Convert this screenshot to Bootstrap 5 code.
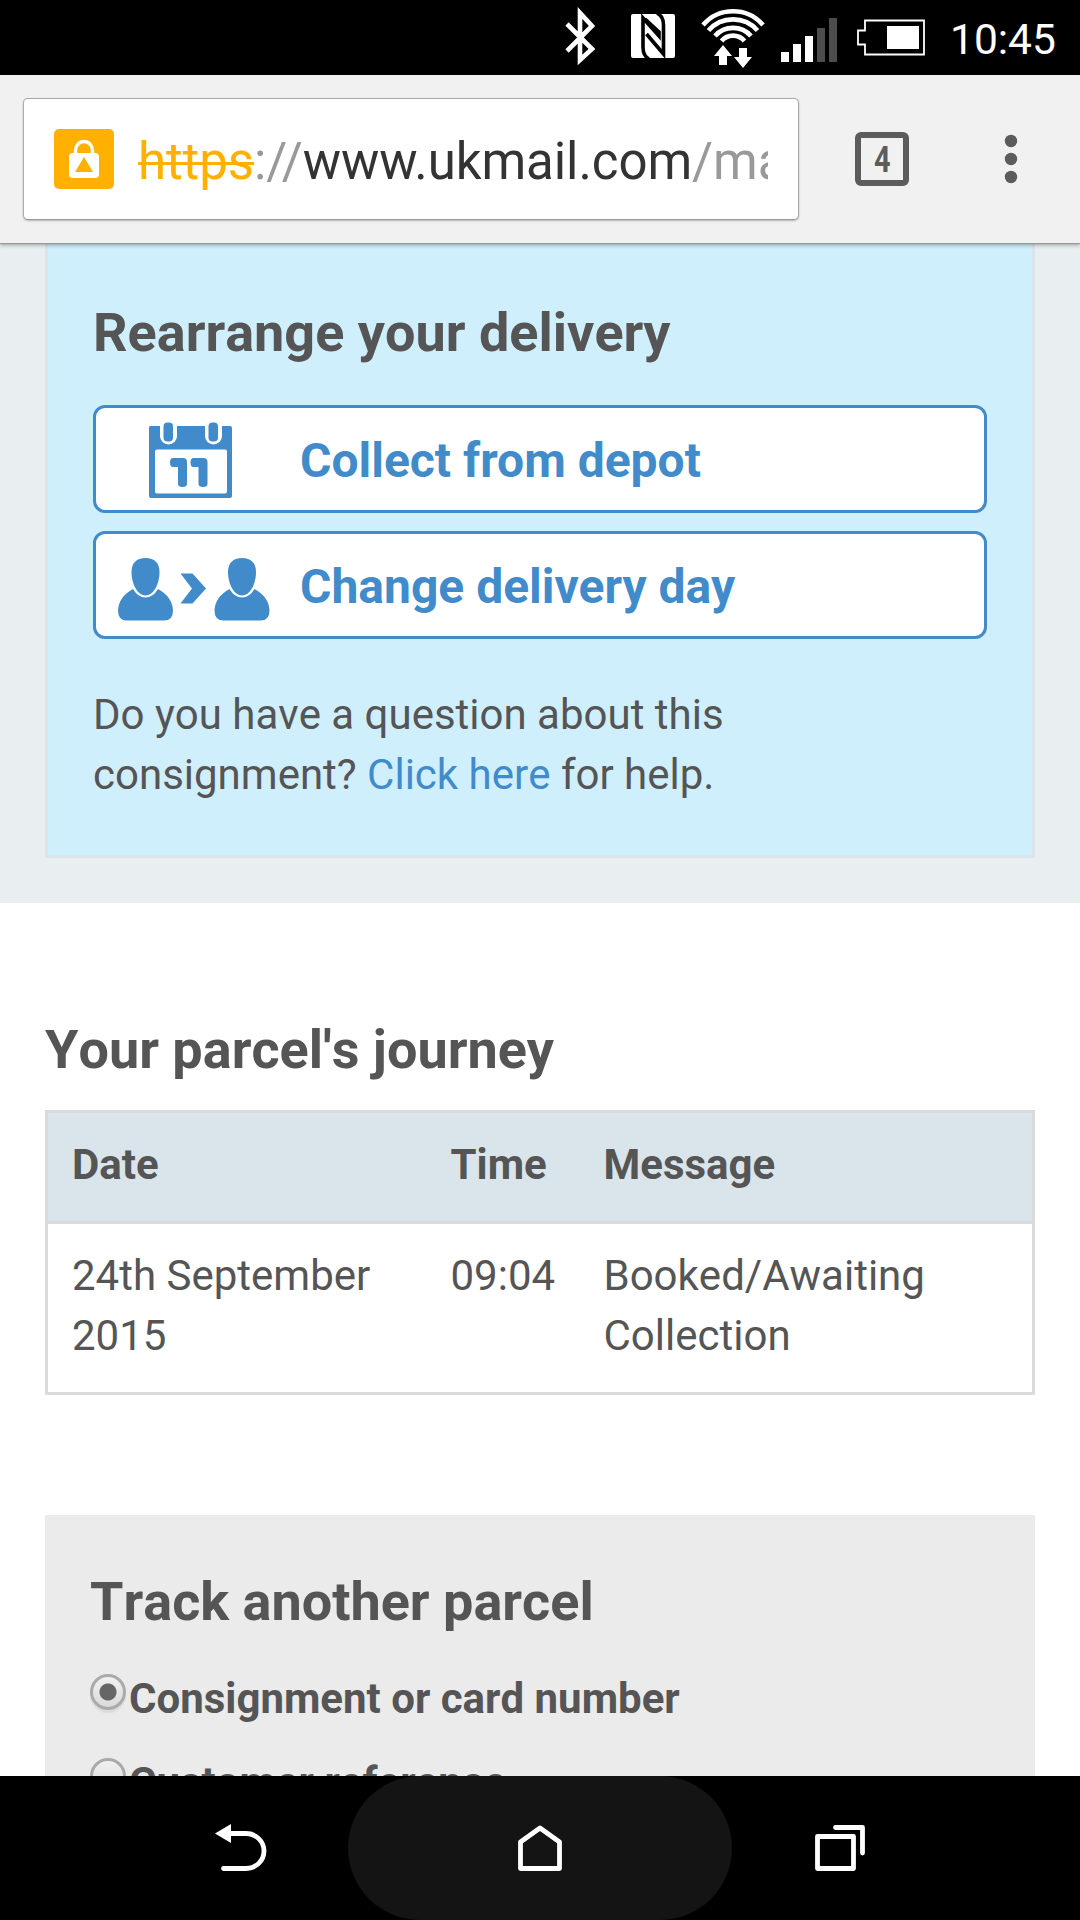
<!DOCTYPE html>
<html lang="en">
<head>
<meta charset="utf-8">
<meta name="viewport" content="width=device-width, initial-scale=1">
<title>UK Mail - parcel tracking</title>
<link href="https://cdn.jsdelivr.net/npm/bootstrap@5.3.0/dist/css/bootstrap.min.css" rel="stylesheet">
<style>
body{font-family:Roboto,"Liberation Sans",sans-serif;font-size:42px;line-height:60px;color:#555;background:#fff;font-kerning:none}
.screen{width:1080px;height:1920px}
.statusbar{height:75px;padding-right:26px}
.statusbar svg{width:400px;height:75px}
.clock{width:104px;line-height:79px;font-size:42.500px;color:#fff}
.toolbar{height:168px;background:#f1f1f1;padding:23px 0 22px 23px;box-shadow:0 1px 0 #999,0 2px 4px rgba(0,0,0,.35);z-index:2}
.omnibox{width:776px;height:122px;border:1px solid #aaa;border-bottom-color:#999;border-radius:5px;padding:0 30px;box-shadow:0 1px 2px rgba(0,0,0,.25)}
.omnibox svg{width:60px;height:60px}
.address{margin-left:24px;font-size:51px;color:#999;line-height:70px;padding-top:6px;font-kerning:normal;letter-spacing:-.08px}
.address s{color:#ffb000;text-decoration-thickness:3px}
.address b{font-weight:400;color:#333}
.tabs-btn{width:54px;height:54px;border:6px solid #5c5c5c;border-radius:6px;margin:34px 0 0 56px;color:#5c5c5c;font-size:36px;line-height:44px}
.tabs-btn span{transform:scaleX(.8)}
.menu-btn{width:14px;height:50px;margin:36px 0 0 95px}
.viewport-page{min-height:0}
.alert-zone{background:#e9eef1;height:660px;padding:0 45px 45px}
.rearrange{height:615px;background:#d0effd;border:3px solid #dbe4e9;border-top:0;padding:60px 45px 0}
h2{font-size:54px;line-height:60px;font-weight:700;margin:0}
.action-list{margin-top:42px;gap:18px}
.action-btn{height:108px;border:3px solid #428bca;border-radius:12px;background:#fff;color:#428bca;font-size:48px;font-weight:700;line-height:60px;padding:0}
.action-btn:hover{border-color:#428bca;color:#2a6496}
.action-btn svg{width:204px;height:102px;flex:none}
.action-btn span{padding-top:4px}
.help{margin:46px 0 0}
.help a{color:#428bca}
.journey{padding:117px 45px 0}
.journey h2{margin-bottom:30px}
.journey .table{--bs-table-color:#555;width:990px;table-layout:fixed;border:3px solid #dbdbdb;margin:0;color:#555}
.journey .table th,.journey .table td{padding:22px 24px 26px;border:0;vertical-align:top}
.journey .table thead tr{border-bottom:3px solid #dbdbdb}
.journey .table th{background:#dae5eb}
.track{margin:120px 45px 0;background:#ebebeb;padding:57px 45px;height:400px}
.track h2{margin-bottom:36px}
.choice{height:84px;font-weight:700}
.choice span{padding-top:1px}
.choice .form-check-input{width:36px;height:36px;margin:6px 3px 0 0;border:3px solid #aaa;background:linear-gradient(#f1f1f1,#dadada);box-shadow:0 3px 1px #dcdcdc;flex:none}
.choice .form-check-input:checked{background:radial-gradient(circle,#666 0 8px,transparent 9px),linear-gradient(#f1f1f1,#dadada)}
.navkeys{height:144px;background:#000;z-index:2}
.navkeys .home-key{width:384px;border-radius:72px;background:#141414}
.navkeys .side-key{width:348px}
.navkeys .back-key{padding-left:213px}
.navkeys .recent-key{padding-left:81px}
.navkeys svg{width:54px;height:50px}
</style>
</head>
<body>
<div class="screen d-flex flex-column overflow-hidden">
  <header class="statusbar bg-black d-flex justify-content-end flex-shrink-0">
    <svg viewBox="550 0 400 75" fill="none" stroke="#fff">
      <path d="M567 24 L592 49 L580 60 V13 L592 26 L567 51" stroke-width="4.6"/>
      <rect x="631" y="14" width="44" height="44" rx="2" fill="#fff" stroke="none"/>
      <path d="M649 59 Q643 56 643 47 V18 L659 36 V32 L645 19 M657 13 Q663.500 16 663.500 25 V54 L646.500 34" stroke="#000" stroke-width="3.6"/>
      <g stroke-width="4.6">
        <path d="M703 25a39.500 39.500 0 0 1 60 0"/><path d="M708.500 30.500a32.500 32.500 0 0 1 49 0"/><path d="M715 36a24 24 0 0 1 36 0"/><path d="M721.500 41a15 15 0 0 1 23 0"/>
      </g>
      <path d="M723 45 l9 11 h-5 v9 h-8 v-9 h-5z M743 68 l-9 -11 h5 v-9 h8 v9 h5z" fill="#fff" stroke="none"/>
      <g stroke="none" fill="#fff"><path d="M781 52h8v10h-8zM793 44h8v18h-8zM805 36h8v26h-8z"/><path d="M817 28h8v34h-8zM829 18h8v44h-8z" fill="#4d4d4d"/></g>
      <path d="M865 20.500 H924 V54.500 H865 V44.500 H858 V30.500 H865Z" stroke-width="1.800"/>
      <rect x="887" y="26" width="32" height="23" fill="#fff" stroke="none"/>
    </svg>
    <span class="clock">10:45</span>
  </header>

  <div class="toolbar d-flex align-items-start position-relative flex-shrink-0">
    <div class="omnibox bg-white d-flex align-items-center overflow-hidden">
      <svg class="flex-shrink-0" viewBox="0 0 60 60"><rect width="60" height="60" rx="5" fill="#ffb000"/><path d="M21.500 27V21.500a8.500 9 0 0 1 17 0V27" fill="none" stroke="#fff" stroke-width="3.500"/><rect x="15" y="24" width="30" height="25" rx="4" fill="#fff"/><path d="M30 28 L39 43 H21Z" fill="#ffb000"/></svg>
      <div class="address text-nowrap overflow-hidden"><s>https</s>://<b>www.ukmail.com</b>/mans</div>
    </div>
    <div class="tabs-btn d-flex justify-content-center fw-bold"><span>4</span></div>
    <svg class="menu-btn" viewBox="0 0 14 50" fill="#5c5c5c"><circle cx="7" cy="7" r="6.200"/><circle cx="7" cy="25" r="6.200"/><circle cx="7" cy="43" r="6.200"/></svg>
  </div>

  <main class="viewport-page flex-grow-1 overflow-hidden">
    <section class="alert-zone">
      <div class="rearrange">
        <h2>Rearrange your delivery</h2>
        <div class="d-grid action-list">
          <button class="btn action-btn d-flex align-items-center text-start" type="button">
            <svg viewBox="96 408 204 102" fill="#428bca">
              <path d="M150 426h10v10a8.500 8.500 0 0 0 17 0v-10h28v10a8.500 8.500 0 0 0 17 0v-10h8q2 0 2 2v68q0 2-2 2h-79q-2 0-2-2v-68q0-2 1-2zM157 449.500q-2 0-2 2v40q0 2 2 2h68q2 0 2-2v-40q0-2-2-2z" fill-rule="evenodd"/>
              <rect x="163.500" y="422.500" width="9.500" height="19" rx="4"/><rect x="208.500" y="422.500" width="9.500" height="19" rx="4"/>
              <path d="M173 458h10q4 0 4 4v22q0 3-4.500 3t-4.500-3v-17h-5q-3 0-3-4.500t3-4.500zM193.500 458h10q4 0 4 4v22q0 3-4.500 3t-4.500-3v-17h-5q-3 0-3-4.500t3-4.500z"/>
            </svg>
            <span>Collect from depot</span>
          </button>
          <button class="btn action-btn d-flex align-items-center text-start" type="button">
            <svg viewBox="96 533.500 204 102" fill="#428bca">
              <g id="person"><path d="M145.500 557.500c9 0 14 5 14 14c0 12-6 23.500-14 23.500s-14-11.500-14-23.500c0-9 5-14 14-14z"/><path d="M133 588.500q5 8.500 12.500 8.500t12.500-8.500q14.500 8 15 21.500q0 10-9 10h-37q-9 0-9-10q.500-13.500 15-21.500z"/></g>
              <use href="#person" x="96.500"/>
              <path d="M180.500 573h12l13.500 15-13.500 15h-12l11.500-15z"/>
            </svg>
            <span>Change delivery day</span>
          </button>
        </div>
        <p class="help">Do you have a question about this<br>consignment? <a class="text-decoration-none" href="#">Click here</a> for help.</p>
      </div>
    </section>

    <section class="journey">
      <h2>Your parcel's journey</h2>
      <table class="table">
        <colgroup><col style="width:380px"><col style="width:153px"><col></colgroup>
        <thead><tr><th>Date</th><th>Time</th><th>Message</th></tr></thead>
        <tbody><tr><td>24th September 2015</td><td>09:04</td><td>Booked/Awaiting Collection</td></tr></tbody>
      </table>
    </section>

    <section class="track">
      <h2>Track another parcel</h2>
      <label class="choice d-flex"><input class="form-check-input" type="radio" name="ref" checked><span>Consignment or card number</span></label>
      <label class="choice d-flex"><input class="form-check-input" type="radio" name="ref"><span>Customer reference</span></label>
    </section>
  </main>

  <nav class="navkeys d-flex flex-shrink-0 position-relative">
    <div class="side-key back-key d-flex align-items-center"><svg viewBox="213 1823 54 50"><path d="M215 1833.500 L231 1824 V1843Z" fill="#fff"/><path d="M228 1833.500H246a18 17.500 0 0 1 0 35H223.500" fill="none" stroke="#fff" stroke-width="4.800" stroke-linecap="round"/></svg></div>
    <div class="home-key d-flex align-items-center justify-content-center"><svg viewBox="513 1823 54 50"><path d="M520.500 1868.500V1842L540 1828L559.500 1842V1868.500Z" fill="none" stroke="#fff" stroke-width="4.800" stroke-linejoin="round"/></svg></div>
    <div class="side-key recent-key d-flex align-items-center"><svg viewBox="813 1823 54 50" fill="none" stroke="#fff" stroke-width="4.800" stroke-linecap="round" stroke-linejoin="round"><rect x="817.500" y="1836.500" width="36" height="32"/><path d="M835.500 1827.500H862.500V1853"/></svg></div>
  </nav>
</div>
<script src="https://cdn.jsdelivr.net/npm/bootstrap@5.3.0/dist/js/bootstrap.bundle.min.js"></script>
</body>
</html>
